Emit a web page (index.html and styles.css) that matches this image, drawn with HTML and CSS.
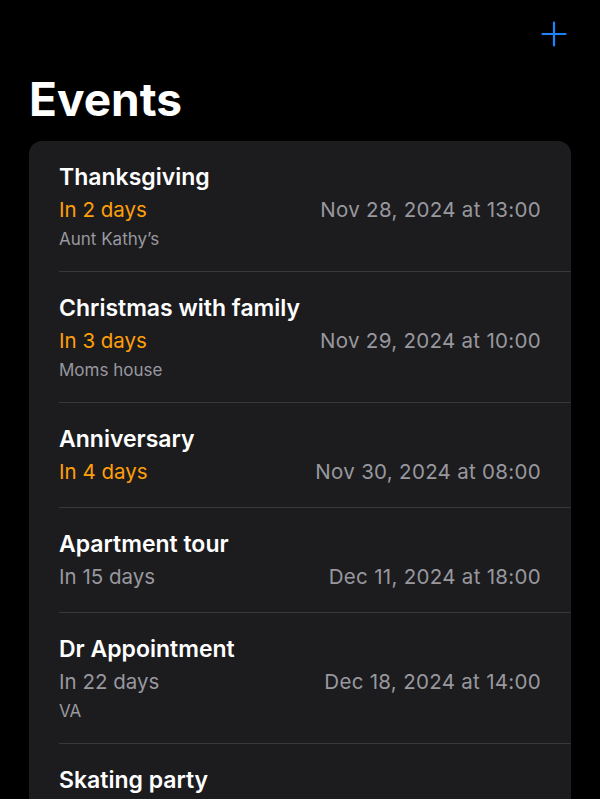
FILE: index.html
```html
<!DOCTYPE html>
<html>
<head>
<meta charset="utf-8">
<link rel="stylesheet" href="styles.css">
</head>
<body>
<div class="screen">
  <div class="topbar">
    <button class="add" aria-label="Add">
      <svg width="26" height="26" viewBox="0 0 26 26"><path d="M13 1.5V24.5M1.5 13H24.5" stroke="#1a84ff" stroke-width="2.2" stroke-linecap="round"/></svg>
    </button>
  </div>
  <h1 class="title">Events</h1>
  <div class="card">
    <div class="row">
      <div class="name">Thanksgiving</div>
      <div class="line"><span class="when soon">In 2 days</span><span class="date">Nov 28, 2024 at 13:00</span></div>
      <div class="place">Aunt Kathy’s</div>
    </div>
    <div class="row">
      <div class="name">Christmas with family</div>
      <div class="line"><span class="when soon">In 3 days</span><span class="date">Nov 29, 2024 at 10:00</span></div>
      <div class="place">Moms house</div>
    </div>
    <div class="row">
      <div class="name">Anniversary</div>
      <div class="line"><span class="when soon">In 4 days</span><span class="date">Nov 30, 2024 at 08:00</span></div>
    </div>
    <div class="row">
      <div class="name">Apartment tour</div>
      <div class="line"><span class="when">In 15 days</span><span class="date">Dec 11, 2024 at 18:00</span></div>
    </div>
    <div class="row">
      <div class="name">Dr Appointment</div>
      <div class="line"><span class="when">In 22 days</span><span class="date">Dec 18, 2024 at 14:00</span></div>
      <div class="place">VA</div>
    </div>
    <div class="row">
      <div class="name">Skating party</div>
      <div class="line"><span class="when">In 30 days</span><span class="date">Dec 26, 2024 at 16:00</span></div>
    </div>
  </div>
</div>
</body>
</html>
```

FILE: styles.css
```css
html, body {
  margin: 0;
  padding: 0;
  background: #000;
}
body {
  font-family: Inter, "Noto Sans", sans-serif;
  color: #fff;
  overflow: hidden;
}
.screen {
  width: 600px;
  height: 799px;
  overflow: hidden;
}
.topbar {
  height: 68px;
  display: flex;
  justify-content: flex-end;
  align-items: center;
  padding-right: 33px;
}
.add {
  background: none;
  border: 0;
  padding: 0;
  width: 26px;
  height: 26px;
  display: flex;
}
.title {
  margin: 0 0 0 29px;
  font-size: 46px;
  font-weight: 700;
  line-height: 62px;
  letter-spacing: 0;
}
.card {
  margin: 11px 29px 0 29px;
  background: #1c1c1e;
  border-radius: 13px;
  overflow: hidden;
}
.row {
  margin-left: 30px;
  padding: 22px 30px 21px 0;
  border-bottom: 1px solid #38383a;
}
.row:last-child {
  border-bottom: 0;
}
.name {
  font-size: 23px;
  font-weight: 600;
  line-height: 28px;
}
.line {
  display: flex;
  justify-content: space-between;
  margin-top: 5px;
  font-size: 20.5px;
  line-height: 28px;
  color: #98989e;
}
.date {
  letter-spacing: 0.3px;
}
.when.soon {
  color: #ff9f0a;
}
.place {
  margin-top: 4px;
  font-size: 17px;
  line-height: 22px;
  color: #98989e;
}
```
